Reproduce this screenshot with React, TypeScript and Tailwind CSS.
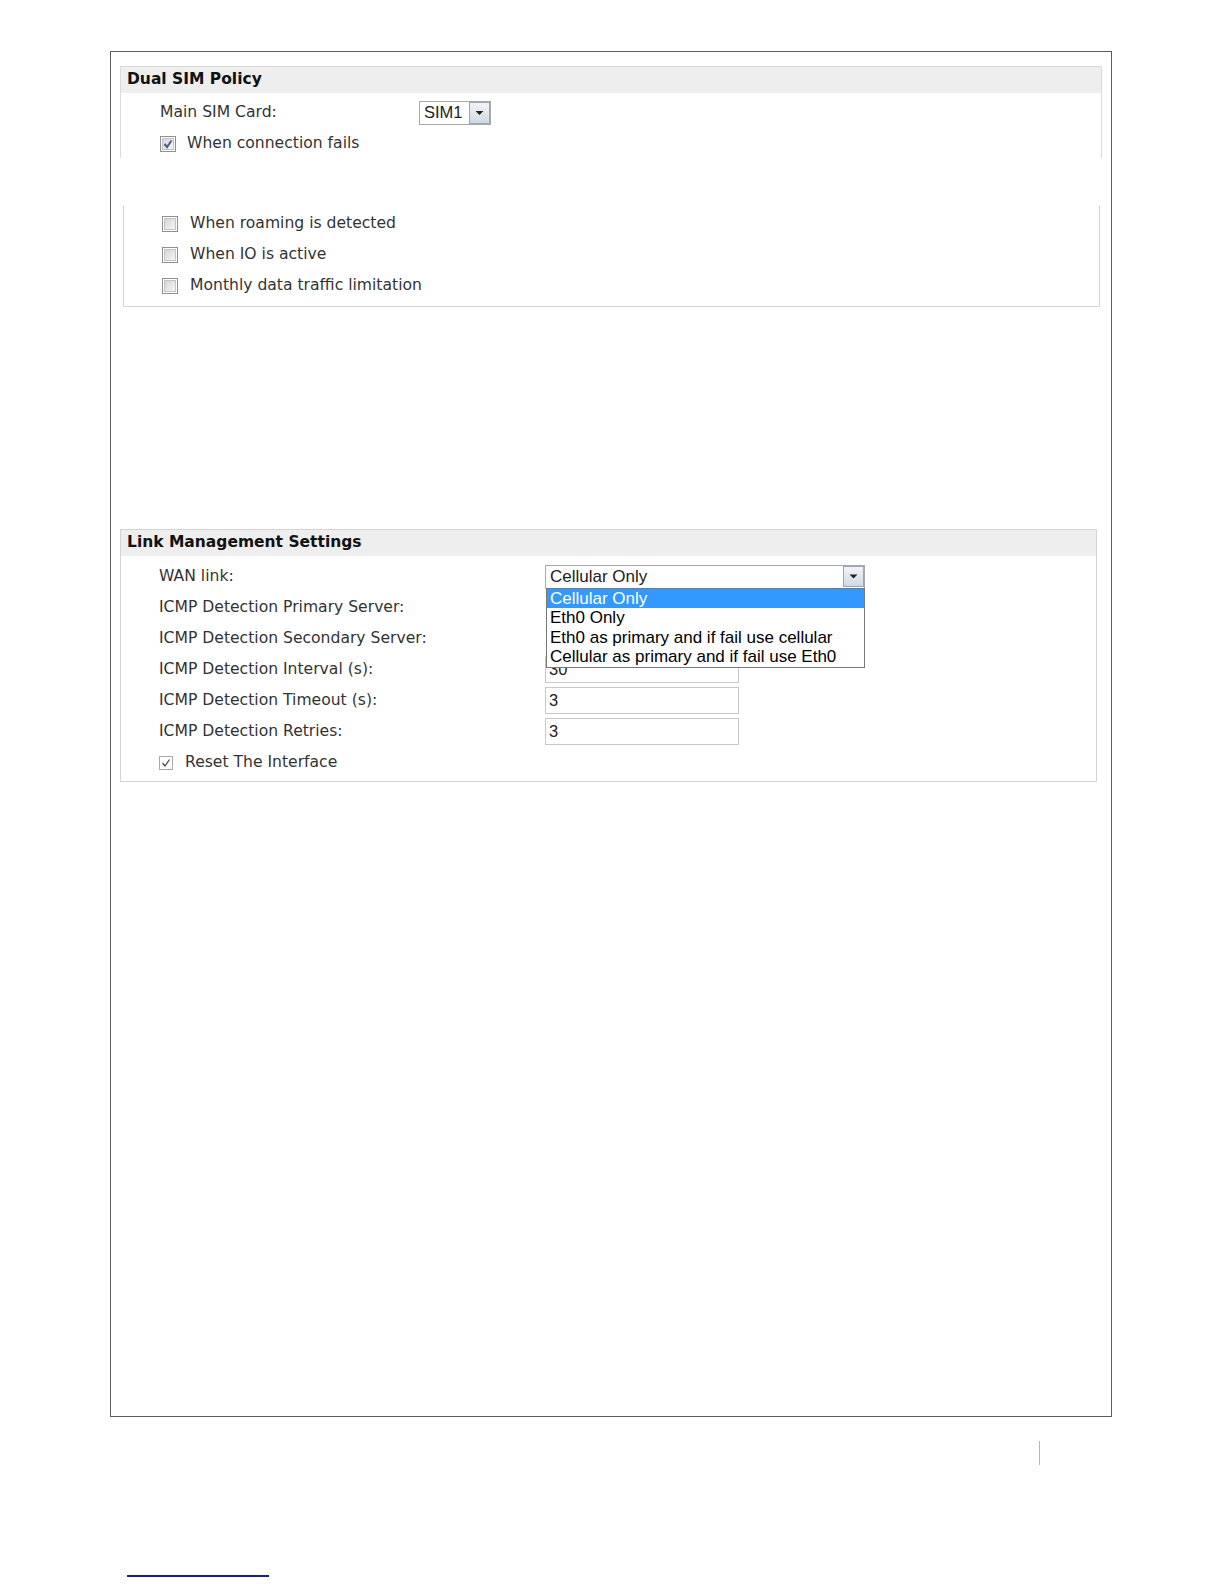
import React from 'react';

const labelFont = { fontFamily: '"DejaVu Sans", Verdana, sans-serif' };
const arialFont = { fontFamily: '"Liberation Sans", Arial, sans-serif' };

const CheckBox = ({ checked = false, thin = false }: { checked?: boolean; thin?: boolean }) => {
  if (thin) {
    return (
      <svg width="14" height="14" viewBox="0 0 14 14" className="shrink-0">
        <rect x="0.5" y="0.5" width="13" height="13" fill="#fff" stroke="#a8a8a8" />
        <path d="M3.5 7 L6 10 L10.5 3.5" fill="none" stroke="#444" strokeWidth="1.2" />
      </svg>
    );
  }
  return (
    <svg width="16" height="16" viewBox="0 0 16 16" className="shrink-0">
      <defs>
        <linearGradient id={checked ? 'cbg1' : 'cbg0'} x1="0" y1="0" x2="1" y2="1">
          <stop offset="0" stopColor="#d4d4d4" />
          <stop offset="1" stopColor="#f7f7f7" />
        </linearGradient>
      </defs>
      <rect x="0.5" y="0.5" width="15" height="15" fill="#fff" stroke="#8e8f8f" />
      <rect x="2.5" y="2.5" width="11" height="11" fill={`url(#${checked ? 'cbg1' : 'cbg0'})`} stroke="#c4c4c4" />
      {checked && <path d="M4.5 8 L7 11 L11.5 4.5" fill="none" stroke="#4a5b96" strokeWidth="2" />}
    </svg>
  );
};

const ArrowBtn = ({ w, h }: { w: number; h: number }) => (
  <svg width={w} height={h} viewBox={`0 0 ${w} ${h}`} className="shrink-0">
    <defs>
      <linearGradient id="ab" x1="0" y1="0" x2="0" y2="1">
        <stop offset="0" stopColor="#f2f5f9" />
        <stop offset="1" stopColor="#cfd8e3" />
      </linearGradient>
    </defs>
    <rect x="0.5" y="0.5" width={w - 1} height={h - 1} fill="url(#ab)" stroke="#98a6b8" />
    <path d={`M${w / 2 - 4} ${h / 2 - 2} L${w / 2 + 4} ${h / 2 - 2} L${w / 2} ${h / 2 + 2} Z`} fill="#222" />
  </svg>
);

const Row = ({ children, className = '' }: { children: React.ReactNode; className?: string }) => (
  <div className={`flex items-center h-[31px] ${className}`}>{children}</div>
);

const TextInput = ({ value }: { value: string }) => (
  <div
    className="w-[194px] h-[27px] border border-[#c8c8c8] bg-white px-[3px] flex items-center text-[16.5px] text-[#222]"
    style={arialFont}
  >
    {value}
  </div>
);

export default function App() {
  const options = [
    'Cellular Only',
    'Eth0 Only',
    'Eth0 as primary and if fail use cellular',
    'Cellular as primary and if fail use Eth0',
  ];

  return (
    <div className="w-[1224px] h-[1584px] bg-white text-[#333]" style={labelFont}>
      <div className="pt-[51px] pl-[110px]">
        <div className="w-[1002px] h-[1366px] border-[1.5px] border-[#5c5c5c] pt-[14px] pl-[9px]">
          {/* Dual SIM Policy */}
          <div className="w-[982px]">
            <div className="h-[27px] bg-[#eeeeee] border-t border-x border-[#dadada] flex items-center pl-[6px] text-[15.5px] font-bold text-[#111]">
              Dual SIM Policy
            </div>
            <div className="h-[65px] border-x border-[#dadada] pl-[39px] pt-[4px] text-[15.6px]">
              <Row>
                <span className="w-[259px]">Main SIM Card:</span>
                <div className="flex h-[24px] w-[72px] border border-[#a9a9a9] bg-white items-center">
                  <span className="flex-1 pl-[4px] text-[16.5px] text-[#222]" style={arialFont}>SIM1</span>
                  <ArrowBtn w={21} h={22} />
                </div>
              </Row>
              <Row>
                <CheckBox checked />
                <span className="ml-[11px]">When connection fails</span>
              </Row>
            </div>
          </div>

          <div className="ml-[3px] mt-[47px] w-[977px] h-[102px] border-x border-b border-[#d4d4d4] pl-[38px] pt-[3px] text-[15.6px]">
            <Row>
              <CheckBox />
              <span className="ml-[12px]">When roaming is detected</span>
            </Row>
            <Row>
              <CheckBox />
              <span className="ml-[12px]">When IO is active</span>
            </Row>
            <Row>
              <CheckBox />
              <span className="ml-[12px]">Monthly data traffic limitation</span>
            </Row>
          </div>

          {/* Link Management Settings */}
          <div className="mt-[222px] w-[977px] border border-[#d4d4d4]">
            <div className="h-[26px] bg-[#eeeeee] flex items-center pl-[6px] text-[15.5px] font-bold text-[#111]">
              Link Management Settings
            </div>
            <div className="pl-[38px] pt-[5px] pb-[3px] text-[15.6px]">
              <Row>
                <span className="w-[386px]">WAN link:</span>
                <div className="relative">
                  <div className="flex w-[320px] h-[24px] border border-[#a9a9a9] bg-white items-center">
                    <span className="flex-1 pl-[4px] text-[17px] text-[#222]" style={arialFont}>Cellular Only</span>
                    <ArrowBtn w={21} h={21} />
                  </div>
                  <div
                    className="absolute left-[1px] top-[23px] w-[319px] border border-[#787878] bg-white z-10 text-[17px] text-black"
                    style={arialFont}
                  >
                    {options.map((o, i) => (
                      <div
                        key={o}
                        className={`h-[19.5px] leading-[19px] pl-[3px] whitespace-nowrap ${i === 0 ? 'bg-[#3399ff] text-white' : ''}`}
                      >
                        {o}
                      </div>
                    ))}
                  </div>
                </div>
              </Row>
              <Row>
                <span>ICMP Detection Primary Server:</span>
              </Row>
              <Row>
                <span>ICMP Detection Secondary Server:</span>
              </Row>
              <Row>
                <span className="w-[386px]">ICMP Detection Interval (s):</span>
                <TextInput value="30" />
              </Row>
              <Row>
                <span className="w-[386px]">ICMP Detection Timeout (s):</span>
                <TextInput value="3" />
              </Row>
              <Row>
                <span className="w-[386px]">ICMP Detection Retries:</span>
                <TextInput value="3" />
              </Row>
              <Row>
                <CheckBox thin />
                <span className="ml-[12px]">Reset The Interface</span>
              </Row>
            </div>
          </div>
        </div>

        {/* page footer marks */}
        <div className="ml-[929px] mt-[24px] w-px h-[24px] bg-[#b5b5b5]" />
        <div className="ml-[17px] mt-[110px] w-[142px] h-[2px] bg-[#1c1c8a]" />
      </div>
    </div>
  );
}
